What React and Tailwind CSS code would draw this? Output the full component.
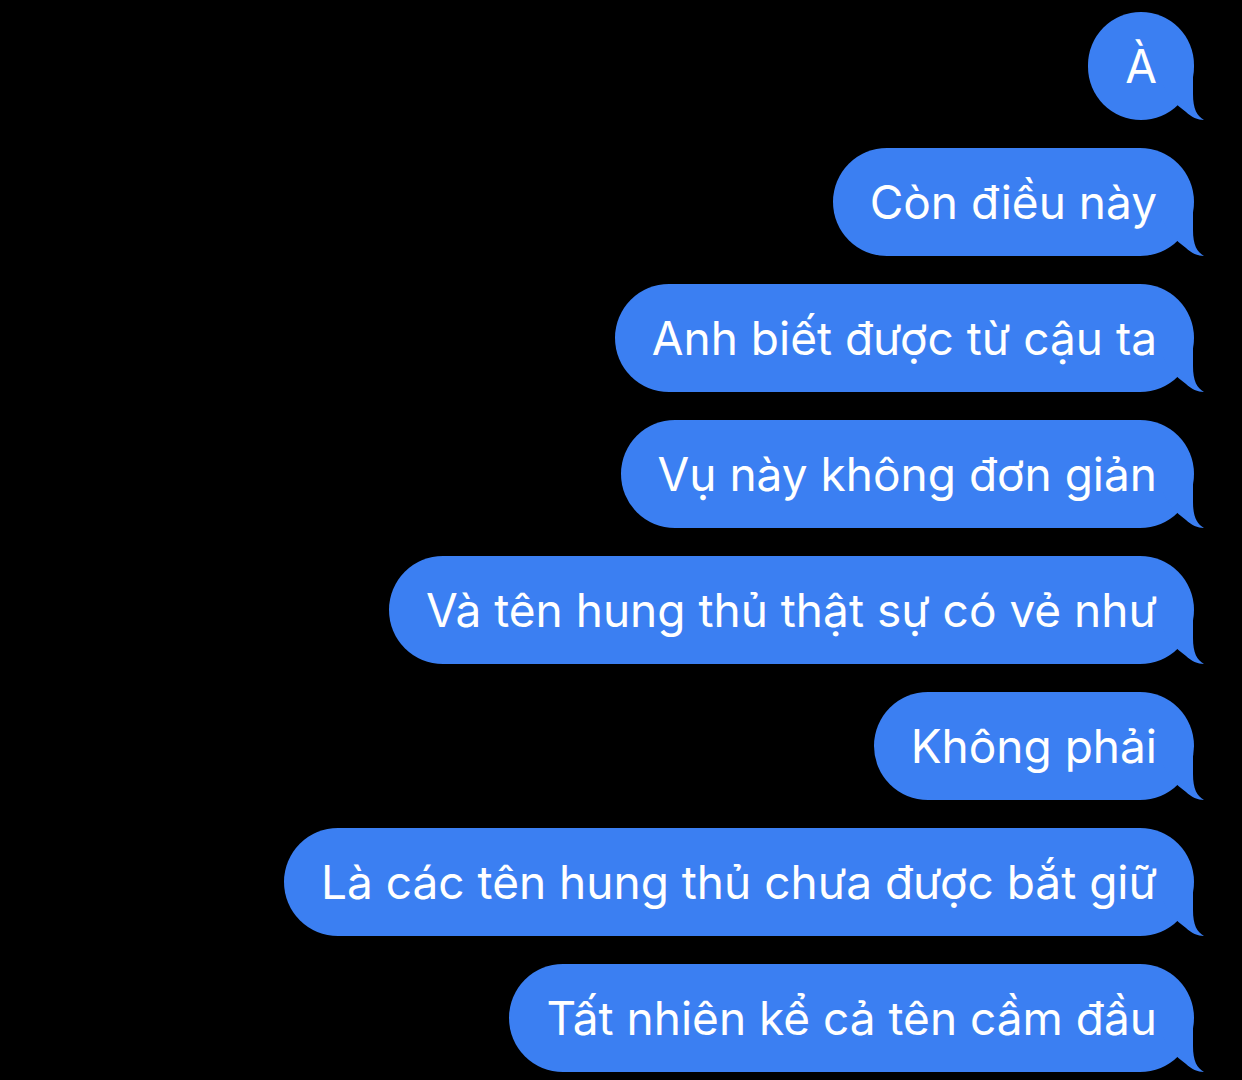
import React from 'react';

const messages = [
  'À',
  'Còn điều này',
  'Anh biết được từ cậu ta',
  'Vụ này không đơn giản',
  'Và tên hung thủ thật sự có vẻ như',
  'Không phải',
  'Là các tên hung thủ chưa được bắt giữ',
  'Tất nhiên kể cả tên cầm đầu',
];

function Tail() {
  return (
    <svg
      className="absolute right-[-11px] bottom-[-1px] w-[52px] h-[47px]"
      viewBox="0 0 52 47"
    >
      <path
        d="M40 0 L40 20 C40 35 44 42 51 46 C45 46 38 43 33 38 Q16 26 10 10 L10 0 Z"
        fill="#3b7ff2"
      />
    </svg>
  );
}

function Bubble({ text }) {
  return (
    <div className="relative h-[108px] min-w-[104px] rounded-[54px] bg-[#3b7ff2] px-[37px] flex items-center justify-center">
      <span className="text-[46px] leading-none text-white whitespace-nowrap">{text}</span>
      <Tail />
    </div>
  );
}

export default function App() {
  return (
    <div
      className="min-h-screen w-full bg-black flex flex-col items-end gap-[28px] pt-[12px] pr-[48px]"
      style={{ fontFamily: 'Inter, "Noto Sans", sans-serif' }}
    >
      {messages.map((m, i) => (
        <Bubble key={i} text={m} />
      ))}
    </div>
  );
}
